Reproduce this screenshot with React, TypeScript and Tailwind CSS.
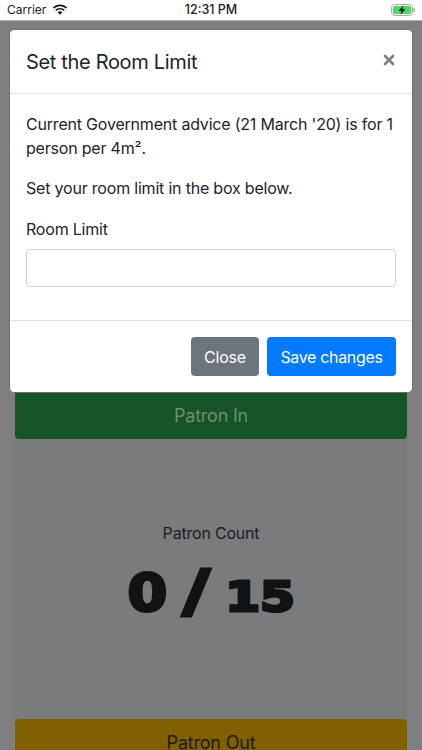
import { X } from "lucide-react";

const font = { fontFamily: "Inter, sans-serif" };

const WifiIcon = () => (
  <svg width="16" height="12" viewBox="0 0 16 12" fill="#111">
    <path d="M8 2.2c2.3 0 4.4.9 6 2.4l1.1-1.2C13.2 1.6 10.7.5 8 .5S2.8 1.6.9 3.4L2 4.6c1.6-1.5 3.7-2.4 6-2.4z" />
    <path d="M8 5.6c1.4 0 2.6.5 3.6 1.4l1.2-1.2C11.5 4.6 9.8 3.9 8 3.9s-3.5.7-4.8 1.9L4.4 7c1-.9 2.2-1.4 3.6-1.4z" />
    <path d="M8 7.2c-1 0-1.8.4-2.4.9L8 10.7l2.4-2.6c-.6-.5-1.4-.9-2.4-.9z" />
  </svg>
);

const BatteryIcon = () => (
  <svg width="24" height="12" viewBox="0 0 24 12">
    <rect x="0.5" y="0.5" width="21" height="11" rx="3" fill="none" stroke="#aaa" />
    <rect x="2" y="2" width="18" height="8" rx="1.5" fill="#4cd964" />
    <rect x="22.5" y="4" width="1.2" height="4" rx="0.6" fill="#999" />
    <path d="M12.5 1.2 7.5 6.8h3l-1 4 5-5.6h-3z" fill="#111" />
  </svg>
);

export default function App() {
  return (
    <div className="relative h-[750px] w-[422px] overflow-hidden bg-white" style={font}>
      <div className="flex h-5 items-center justify-between px-[7px] text-[12px] text-[#222]">
        <div className="flex items-center gap-[6px]">
          <span>Carrier</span>
          <WifiIcon />
        </div>
        <span className="absolute left-0 right-0 text-center text-[12.5px] font-medium">12:31 PM</span>
        <BatteryIcon />
      </div>
      <div className="h-px bg-[#b0b0b0]" />

      <div className="h-[729px] bg-[#7f7f7f] px-[15px] pt-[371px]">
        <div className="flex h-[47px] items-center justify-center rounded-b-[4px] bg-[#145426] text-[18px] tracking-[-0.2px] text-[#6e8c76]">
          Patron In
        </div>
        <div className="flex h-[280px] flex-col items-center bg-[#7a7b7c] pt-[82px]">
          <div className="text-[16px] leading-6 tracking-[-0.2px] text-[#1c1c1e]">Patron Count</div>
          <div className="mt-[18px] flex items-baseline gap-[13px] font-['DejaVu_Sans'] font-bold text-[#111214] [-webkit-text-stroke:3px_#111214]">
            <span className="flex w-[39px] scale-x-[1.1] justify-center text-[52px] leading-[56px]">0</span>
            <span className="flex w-[32px] scale-x-[1.33] justify-center text-[57px] leading-[56px]">/</span>
            <span className="flex w-[70px] scale-x-[1.22] justify-center text-[41px] leading-[56px]">15</span>
          </div>
        </div>
        <div className="flex h-[60px] justify-center rounded-t-[4px] bg-[#806000] pt-[10px] text-[18px] leading-[27px] tracking-[-0.2px] text-[#1f1a08]">
          Patron Out
        </div>
      </div>

      <div className="absolute left-[9px] top-[29px] w-[404px] rounded-[5px] border border-[#6f6f6f] bg-white text-[#212529]">
        <div className="flex h-[64px] items-center justify-between border-b border-[#dee2e6] pl-4 pr-[15px]">
          <h5 className="text-[20px] leading-[30px] tracking-[-0.33px]">Set the Room Limit</h5>
          <X size={16} strokeWidth={4} className="mb-[4px] text-[#7f7f7f]" />
        </div>
        <div className="h-[226px] px-4 pt-[18px] text-[16px] leading-6 tracking-[-0.2px]">
          <p>Current Government advice (21 March '20) is for 1 person per 4m².</p>
          <p className="mt-4">Set your room limit in the box below.</p>
          <div className="mt-[17px]">Room Limit</div>
          <input className="mt-2 block h-[38px] w-full rounded-[4px] border border-[#ced4da] bg-white" />
        </div>
        <div className="flex h-[72px] items-center justify-end gap-2 border-t border-[#dee2e6] pr-4">
          <button className="h-[39px] w-[68px] rounded-[4px] bg-[#6c757d] tracking-[-0.2px] text-white">Close</button>
          <button className="h-[39px] w-[129px] rounded-[4px] bg-[#007bff] tracking-[-0.33px] text-white">Save changes</button>
        </div>
      </div>
    </div>
  );
}
